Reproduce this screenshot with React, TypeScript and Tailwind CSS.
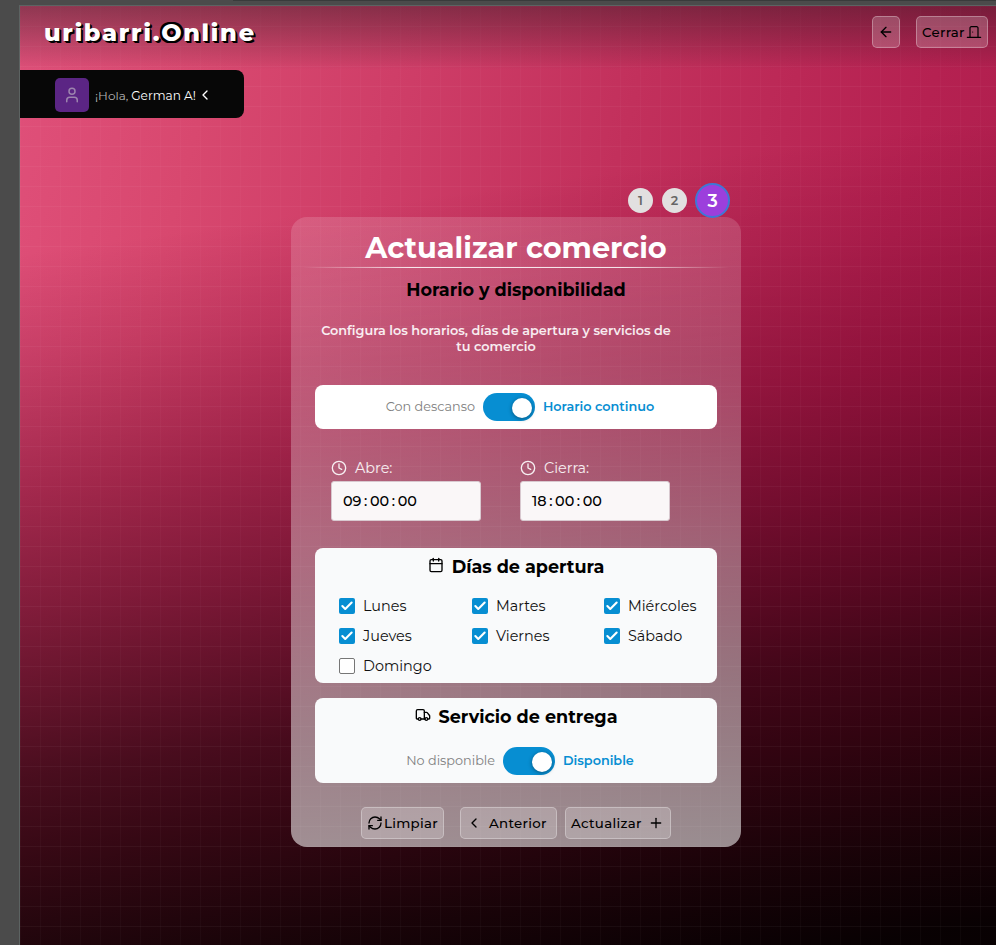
import React from "react";
import { ArrowLeft, Calendar, Check, ChevronLeft, Clock, DoorClosed, Plus, RefreshCw, Truck, User } from "lucide-react";

const days = [
  { name: "Lunes", open: true },
  { name: "Martes", open: true },
  { name: "Miércoles", open: true },
  { name: "Jueves", open: true },
  { name: "Viernes", open: true },
  { name: "Sábado", open: true },
  { name: "Domingo", open: false },
];

const buttonClass =
  "flex h-8 shrink-0 items-center rounded-[5px] border border-white/30 bg-white/20 text-[13.33px] font-medium tracking-[0.3px] text-black whitespace-nowrap";

function Toggle() {
  return (
    <span className="flex h-7 w-[52px] shrink-0 items-center justify-end rounded-full bg-[#078ed2] pt-0.5 pr-[3px]">
      <span className="size-5 rounded-full bg-white shadow-[0_1px_4px_rgba(0,0,0,0.4)]" />
    </span>
  );
}

function SwitchRow({ off, on }: { off: string; on: string }) {
  return (
    <div className="flex h-7 items-center justify-center gap-2 text-[12.8px] leading-none whitespace-nowrap">
      <span className="text-[#808080]">{off}</span>
      <Toggle />
      <span className="font-semibold text-[#078ed2]">{on}</span>
    </div>
  );
}

function TimeField({ label, value }: { label: string; value: string }) {
  const [h, m, s] = value.split(":");
  return (
    <label className="flex w-[150px] flex-col">
      <span className="flex h-[26px] items-center gap-2 text-[14.4px] text-white/90">
        <Clock size={16} strokeWidth={2} />
        <span className="pt-0.5">{label}</span>
      </span>
      <span className="flex h-10 items-center gap-[2.6px] rounded-[3px] border border-[#d8c8cf] bg-[#faf7f8] px-[11px] pt-0.5 text-[14.4px] font-medium text-black">
        <span>{h}</span>
        <span>:</span>
        <span>{m}</span>
        <span>:</span>
        <span>{s}</span>
      </span>
    </label>
  );
}

function SectionTitle({ icon, children }: { icon: React.ReactNode; children: string }) {
  return (
    <h3 className="flex h-9 items-center justify-center gap-2 text-[17.6px] font-bold whitespace-nowrap">
      <span className="-mt-[3px]">{icon}</span>
      <span className="pt-0.5">{children}</span>
    </h3>
  );
}

export default function App() {
  return (
    <div className="h-[945px] w-[996px] overflow-hidden bg-[#4b4b4b] font-['Montserrat',sans-serif] text-black">
      <div className="flex h-[5px]">
        <div className="ml-[233px] h-px flex-1 bg-[#393b3b]" />
      </div>
      <div className="ml-[19px] h-[940px] border-t border-l border-[#5c6362] bg-[linear-gradient(105deg,#e0507a_0%,#d8486f_17%,#cf3e68_32%,#c2305c_52%,#b52151_76%,#a81b49_100%)]">
        <div className="h-full bg-[linear-gradient(172deg,rgba(110,0,40,0)_23%,rgba(105,0,38,0.18)_32.5%,rgba(98,0,33,0.46)_45%,rgba(75,0,25,0.62)_56%,rgba(57,0,18,0.72)_64%,rgba(41,0,12,0.81)_71.5%,rgba(32,0,8,0.88)_79%,rgba(16,1,4,0.95)_90%,rgba(5,0,1,0.98)_98%)]">
          <div className="flex h-full flex-col bg-[linear-gradient(rgba(255,255,255,0.038)_1px,transparent_1px),linear-gradient(90deg,rgba(255,255,255,0.025)_1px,transparent_1px)] bg-[size:20px_20px]">
            <header className="flex h-16 shrink-0 items-start justify-between bg-[linear-gradient(rgba(45,25,32,0.45),rgba(45,25,32,0.3)_35%,transparent)] pt-2.5 pr-2 pl-6">
              <h1 className="flex h-8 items-center pt-px text-[24px] leading-none font-extrabold tracking-[1.72px] text-white [text-shadow:2px_2px_0_#000,1px_1px_0_#000]">
                <span>uribarri.</span>
                <span className="[text-shadow:2px_2px_0_#000,-2px_-2px_0_#000,2px_-2px_0_#000,-2px_2px_0_#000,0_-2px_0_#000,-2px_0_0_#000,3px_0_0_#000,1px_0_0_#000]">O</span>
                <span>nline</span>
              </h1>
              <div className="flex gap-4">
                <button className={`${buttonClass} w-7 justify-center pb-px`}>
                  <ArrowLeft size={16} className="shrink-0" />
                </button>
                <button className={`${buttonClass} w-[72px] gap-px pl-[5px]`}>
                  <span className="pt-0.5">Cerrar</span>
                  <DoorClosed size={16} className="shrink-0" strokeWidth={1.8} />
                </button>
              </div>
            </header>

            <div className="flex h-12 w-56 shrink-0 items-center rounded-r-lg bg-[#070707] pt-0.5 pl-[35px] text-[12.1px] whitespace-nowrap text-[#b5b5b5]">
              <span className="mr-1.5 flex size-[34px] items-center justify-center rounded-[5px] bg-[#5b2584] text-[#9c84ae]">
                <User size={18} />
              </span>
              <span className="pt-px text-[12px]">¡Hola,</span>
              <span className="ml-[3px] pt-0.5 text-white">German A!</span>
              <ChevronLeft size={16} className="ml-px text-white" />
            </div>

            <div className="mt-[65px] ml-[271px] flex w-[450px] flex-col">
              <ol className="flex h-[34px] items-center justify-end gap-2 pr-[11px] text-[12.8px] font-semibold text-[#666]">
                <li className="flex size-[25px] items-center justify-center rounded-full bg-[#e2e0e0] pt-px">1</li>
                <li className="ml-px flex size-[25px] items-center justify-center rounded-full bg-[#e2e0e0] pt-px">2</li>
                <li className="z-10 flex size-[35px] shrink-0 items-center justify-center rounded-full border-2 border-[#3d78d6] bg-[#9c3fdc] pt-0.5 text-[17.6px] text-white">3</li>
              </ol>

              <section className="flex h-[630px] flex-col rounded-2xl bg-[linear-gradient(rgba(255,255,255,0.15),rgba(255,255,255,0.2)_23%,rgba(255,255,255,0.27)_37%,rgba(255,255,255,0.35)_51%,rgba(255,255,255,0.45)_75%,rgba(255,255,255,0.55))] px-6">
                <h2 className="-mx-6 flex h-[50px] items-center justify-center pt-3 text-[28.8px] leading-none font-bold text-white">
                  Actualizar comercio
                </h2>
                <div className="-mx-3 h-px shrink-0 bg-[linear-gradient(90deg,transparent,rgba(255,255,255,0.85)_25%,rgba(255,255,255,0.85)_75%,transparent)]" />
                <p className="mt-[11px] text-center text-[17.6px] leading-[22px] font-bold whitespace-nowrap">Horario y disponibilidad</p>
                <p className="mt-[22px] mr-10 text-center text-[12.8px] leading-4 font-semibold text-white/90">
                  Configura los horarios, días de apertura y servicios de<br />tu comercio
                </p>

                <div className="mt-[30px] flex h-11 shrink-0 flex-col justify-center rounded-lg bg-white pl-2">
                  <SwitchRow off="Con descanso" on="Horario continuo" />
                </div>

                <div className="mt-[26px] flex gap-[39px] pl-4">
                  <TimeField label="Abre:" value="09:00:00" />
                  <TimeField label="Cierra:" value="18:00:00" />
                </div>

                <div className="mt-[27px] h-[135px] shrink-0 rounded-lg bg-[#f9fafb]">
                  <SectionTitle icon={<Calendar size={16} />}>Días de apertura</SectionTitle>
                  <ul className="mt-[7px] grid grid-cols-[133px_132px_1fr] pl-6 text-[14.4px] text-[#111]">
                    {days.map((day) => (
                      <li key={day.name} className="flex h-[30px] items-center gap-2 whitespace-nowrap">
                        {day.open ? (
                          <span className="flex size-4 items-center justify-center rounded-[2px] bg-[#078ed2] text-white">
                            <Check size={14} strokeWidth={3.6} />
                          </span>
                        ) : (
                          <span className="size-4 rounded-[2px] border border-[#767676] bg-white" />
                        )}
                        <span className="pt-0.5">{day.name}</span>
                      </li>
                    ))}
                  </ul>
                </div>

                <div className="mt-[15px] h-[85px] shrink-0 rounded-lg bg-[#f9fafb]">
                  <SectionTitle icon={<Truck size={16} />}>Servicio de entrega</SectionTitle>
                  <div className="mt-[13px] pl-2">
                    <SwitchRow off="No disponible" on="Disponible" />
                  </div>
                </div>

                <div className="mt-6 flex justify-center">
                  <button className={`${buttonClass} mr-4 w-[83px] gap-px pl-[5px]`}>
                    <RefreshCw size={16} className="shrink-0" />
                    <span className="pt-0.5">Limpiar</span>
                  </button>
                  <button className={`${buttonClass} mr-2 w-[97px] gap-[7px] pl-[5px]`}>
                    <ChevronLeft size={16} className="shrink-0" />
                    <span className="pt-0.5">Anterior</span>
                  </button>
                  <button className={`${buttonClass} w-[106px] gap-1.5 pl-[5px]`}>
                    <span className="pt-0.5">Actualizar</span>
                    <Plus size={16} className="shrink-0" />
                  </button>
                </div>
              </section>
            </div>
          </div>
        </div>
      </div>
    </div>
  );
}
